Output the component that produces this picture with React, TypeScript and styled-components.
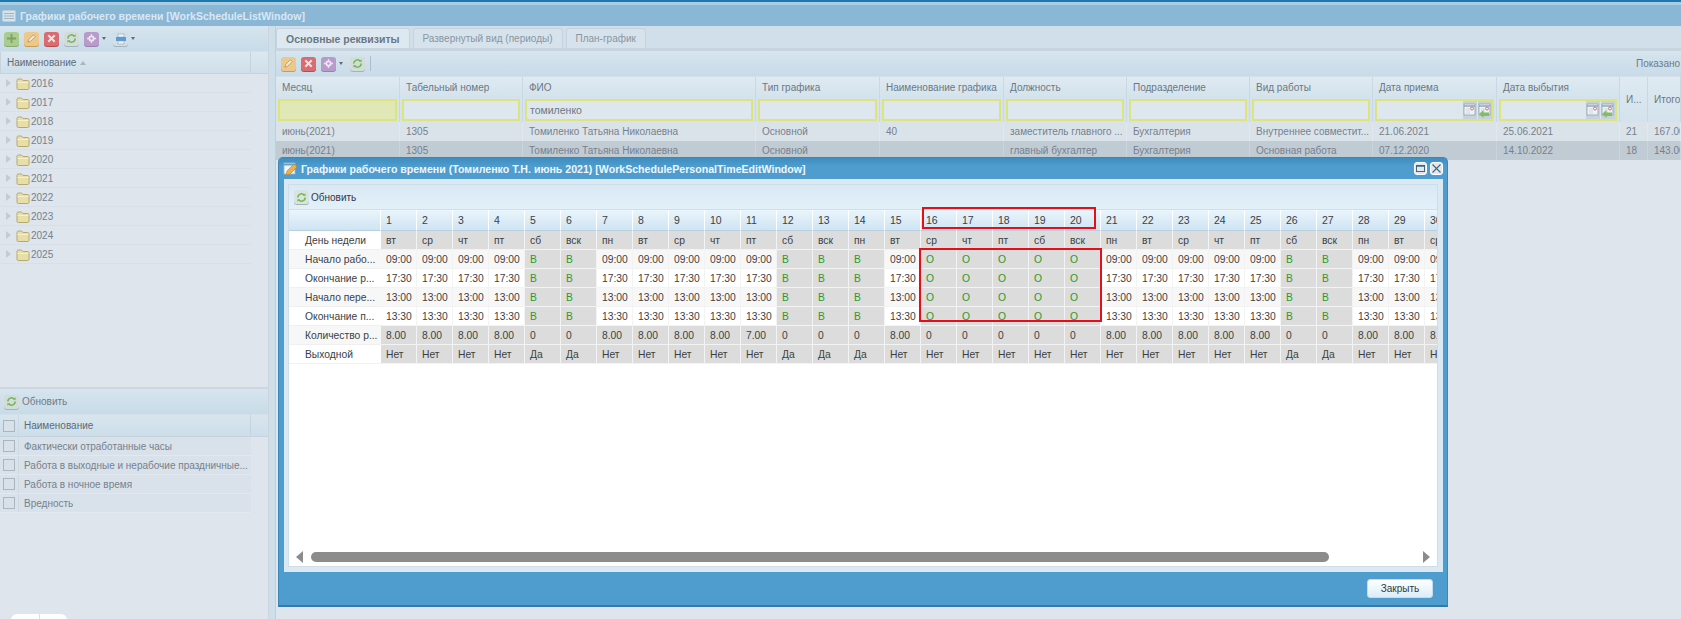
import React from 'react';
import styled, { createGlobalStyle } from 'styled-components';

const GlobalStyle = createGlobalStyle`
  html, body {
    margin: 0;
    padding: 0;
    height: 100%;
    overflow: hidden;
    background: #dee5ec;
  }
  #root {
    height: 100%;
  }
  * {
    box-sizing: border-box;
  }
`;

const FONT = '"Liberation Sans", "DejaVu Sans", sans-serif';

const Page = styled.div`
  position: relative;
  width: 1681px;
  height: 619px;
  overflow: hidden;
  font-family: ${FONT};
  font-size: 10px;
  color: #6f7c88;
  background: #dee5ec;
  display: flex;
  flex-direction: column;
`;

const TopStrip = styled.div`
  height: 5px;
  flex: none;
  background: linear-gradient(to bottom, #1d78ad 0, #1d78ad 2px, #a9cde2 2px, #a9cde2 5px);
`;

const TitleBar = styled.div`
  height: 21px;
  flex: none;
  display: flex;
  align-items: center;
  gap: 4px;
  padding-left: 2px;
  background: #8ab7d6;
  color: #d9e8f2;
  font-weight: 700;
  font-size: 10.5px;
`;

const Body = styled.div`
  flex: 1;
  display: flex;
  min-height: 0;
`;

const LeftColumn = styled.div`
  width: 269px;
  flex: none;
  display: flex;
  flex-direction: column;
  border-right: 1px solid #c9d5df;
`;

const Splitter = styled.div`
  width: 7px;
  flex: none;
  background: #cfdfea;
  border-right: 1px solid #c4ced8;
`;

const RightColumn = styled.div`
  flex: 1;
  min-width: 0;
  display: flex;
  flex-direction: column;
`;

const Toolbar = styled.div<{ $inset?: number }>`
  height: 26px;
  flex: none;
  display: flex;
  align-items: center;
  gap: 5px;
  padding: 0 4px 0 ${(p) => p.$inset ?? 4}px;
  background: linear-gradient(to bottom, #d6e5ef, #c8dbe8);
  border-bottom: 1px solid #d4dfe7;
`;

const ToolButton = styled.span<{ $c: string; $d: string }>`
  width: 15px;
  height: 14px;
  flex: none;
  display: inline-flex;
  align-items: center;
  justify-content: center;
  border-radius: 3px;
  background: ${(p) => p.$c};
  box-shadow: 0 1px 0 ${(p) => p.$d};
`;

const Caret = styled.span`
  width: 0;
  height: 0;
  margin: 0 2px 0 -2px;
  border-left: 2.5px solid transparent;
  border-right: 2.5px solid transparent;
  border-top: 3px solid #5e6b76;
`;

const TreeHeader = styled.div`
  height: 22px;
  flex: none;
  display: flex;
  background: linear-gradient(to bottom, #dce8f0, #cfdfea);
  border-bottom: 1px solid #c4d3de;
  color: #5d6b78;
`;

const TreeHeaderCell = styled.div`
  width: 251px;
  flex: none;
  display: flex;
  align-items: center;
  gap: 4px;
  padding-left: 6px;
  border-left: 1px solid #c4d3de;
  border-right: 1px solid #c4d3de;
`;

const SortArrow = styled.span`
  width: 0;
  height: 0;
  border-left: 3px solid transparent;
  border-right: 3px solid transparent;
  border-bottom: 4px solid #a9b6c1;
`;

const TreeRow = styled.div`
  height: 19px;
  width: 251px;
  flex: none;
  display: flex;
  align-items: center;
  padding-left: 6px;
  border-bottom: 1px solid #d7e0e8;
  color: #75818c;
`;

const Expander = styled.span`
  width: 0;
  height: 0;
  margin-right: 5px;
  border-top: 4px solid transparent;
  border-bottom: 4px solid transparent;
  border-left: 5px solid #c1ccd5;
`;

const Folder = styled.svg`
  width: 14px;
  height: 13px;
  margin-right: 1px;
  flex: none;
`;

const LeftTop = styled.div`
  height: 363px;
  flex: none;
  display: flex;
  flex-direction: column;
  border-bottom: 2px solid #cdd7e0;
`;

const RefreshLabel = styled.span`
  color: #6f7c88;
  margin-left: -2px;
`;

const CheckHeader = styled.div`
  height: 22px;
  flex: none;
  display: flex;
  align-items: center;
  background: linear-gradient(to bottom, #d8e5ee, #cddeea);
  border-bottom: 1px solid #c4d3de;
  color: #5d6b78;
`;

const CheckHeaderName = styled.div`
  width: 232px;
  height: 100%;
  flex: none;
  display: flex;
  align-items: center;
  padding-left: 5px;
  border-right: 1px solid #c4d3de;
`;

const CheckCell = styled.div`
  width: 19px;
  height: 100%;
  flex: none;
  display: flex;
  align-items: center;
  justify-content: center;
  border-right: 1px solid #ced9e2;
`;

const CheckBox = styled.span`
  width: 12px;
  height: 12px;
  border: 1px solid #a9b5bf;
  background: #d9e1e8;
`;

const CheckLabel = styled.span`
  padding-left: 5px;
  white-space: nowrap;
  overflow: hidden;
  text-overflow: ellipsis;
`;

const CheckRow = styled.div`
  width: 251px;
  height: 19px;
  flex: none;
  display: flex;
  align-items: center;
  background: #d9e2ea;
  border-bottom: 1px solid #e2e8ee;
  color: #75818c;
`;

const Tabs = styled.div`
  height: 25px;
  flex: none;
  display: flex;
  align-items: flex-end;
  gap: 3px;
  background: #d0dfe9;
  border-bottom: 3px solid #c9d5de;
`;

const Tab = styled.div<{ $active?: boolean }>`
  height: 20px;
  display: flex;
  align-items: center;
  padding: 0 9px;
  border-radius: 3px 3px 0 0;
  border: 1px solid #c5d3de;
  border-bottom: none;
  font-size: ${(p) => (p.$active ? '10.5px' : '10px')};
  background: ${(p) => (p.$active ? '#dde8f0' : '#d6e3ec')};
  color: ${(p) => (p.$active ? '#6a7884' : '#8996a1')};
  font-weight: ${(p) => (p.$active ? 700 : 400)};
`;

const ShownLabel = styled.span`
  margin-left: auto;
  margin-right: -4px;
  width: 45px;
  overflow: hidden;
  white-space: nowrap;
  color: #6f7c88;
`;

const ToolDivider = styled.span`
  width: 1px;
  height: 15px;
  background: #aebfcb;
`;

const MainGrid = styled.div`
  display: grid;
  grid-template-columns: 124px 123px 233px 124px 124px 123px 123px 123px 124px 123px 28px 1fr;
  grid-template-rows: 21px 24px 19px 19px;
  flex: none;
`;

const HeadCell = styled.div<{ $span?: boolean }>`
  display: flex;
  align-items: center;
  padding-left: 6px;
  white-space: nowrap;
  overflow: hidden;
  background: linear-gradient(to bottom, #dfeaf2, #d3e2ec);
  border-right: 1px solid #c9d8e2;
  color: #6a7884;
  ${(p) => p.$span && 'grid-row: span 2;'}
`;

const FilterCell = styled.div`
  background: #d5e3ec;
  border-right: 1px solid #c9d8e2;
  padding: 0 2px;
  display: flex;
  align-items: center;
`;

const FilterInput = styled.div<{ $filled?: boolean }>`
  flex: 1;
  height: 22px;
  min-width: 0;
  display: flex;
  align-items: center;
  justify-content: flex-end;
  border: 2px solid #dde47c;
  background: ${(p) => (p.$filled ? '#dfe8b6' : '#dfe7ee')};
  color: #6a7884;
  font-size: 10.5px;
`;

const FilterText = styled.span`
  flex: 1;
  padding-left: 3px;
`;

const DateButton = styled.span`
  width: 15px;
  height: 18px;
  flex: none;
  display: flex;
  align-items: center;
  justify-content: center;
  background: #c6d3de;
  border-left: 1px solid #dfe7ee;
`;

const DataCell = styled.div<{ $selected?: boolean }>`
  display: flex;
  align-items: center;
  padding-left: 6px;
  white-space: nowrap;
  overflow: hidden;
  background: ${(p) => (p.$selected ? '#c1cbd4' : '#dbe3ea')};
  border-right: 1px solid ${(p) => (p.$selected ? '#cbd4dc' : '#e2e8ee')};
  color: #75818c;
`;

const Window = styled.div`
  position: absolute;
  left: 278px;
  top: 157px;
  width: 1170px;
  height: 450px;
  display: flex;
  flex-direction: column;
  background: #4f9dcf;
  border-radius: 5px 5px 0 0;
  border: 1px solid #3d87b8;
  border-bottom: 2px solid #3479a8;
`;

const WindowTitle = styled.div`
  height: 21px;
  flex: none;
  display: flex;
  align-items: center;
  gap: 3px;
  padding: 0 4px;
  color: #eef6fb;
  font-weight: 700;
  font-size: 10.6px;
  background: linear-gradient(to bottom, #3f8cbf, #4f9dcf 40%);
  border-radius: 4px 4px 0 0;
`;

const TitleSpacer = styled.span`
  flex: 1;
`;

const WinButton = styled.span`
  width: 13px;
  height: 13px;
  display: flex;
  align-items: center;
  justify-content: center;
  background: #dfe9f1;
  border: 1px solid #ffffff;
  border-radius: 3px;
`;

const WindowBody = styled.div`
  flex: none;
  height: 393px;
  margin: 0 4px 0 5px;
  padding: 5px 5px 5px 4px;
  background: #dbe9f4;
`;

const InnerPanel = styled.div`
  position: relative;
  height: 100%;
  display: flex;
  flex-direction: column;
  background: #ffffff;
  border: 1px solid #cfdde8;
`;

const InnerToolbar = styled.div`
  height: 25px;
  flex: none;
  display: flex;
  align-items: center;
  gap: 2px;
  padding-left: 5px;
  background: linear-gradient(to bottom, #d9e9f4, #e2f0f9);
  color: #2f3a44;
  border-bottom: 1px solid #d3dee6;
`;

const ScheduleGrid = styled.div`
  flex: none;
  overflow: hidden;
  display: grid;
  grid-template-columns: 92px repeat(30, 36px);
  grid-template-rows: 21px repeat(7, 19px);
  color: #3a3f45;
  font-size: 10.3px;
`;

const DayHead = styled.div`
  display: flex;
  align-items: center;
  padding-left: 5px;
  background: linear-gradient(to bottom, #eaf5fc, #cfe4f3);
  border-right: 1px solid #ffffff;
  border-bottom: 1px solid #b9cfdf;
  font-size: 10.5px;
`;

const RowLabel = styled.div<{ $alt?: boolean }>`
  display: flex;
  align-items: center;
  padding-left: 16px;
  white-space: nowrap;
  overflow: hidden;
  background: ${(p) => (p.$alt ? '#f7f7f7' : '#ffffff')};
  border-bottom: 1px solid #f0f0f0;
`;

const DayCell = styled.div<{ $off?: boolean; $gray?: boolean; $alt?: boolean }>`
  display: flex;
  align-items: center;
  padding-left: 5px;
  white-space: nowrap;
  overflow: hidden;
  background: ${(p) => (p.$off || p.$gray ? '#dcdcdc' : p.$alt ? '#f7f7f7' : '#ffffff')};
  color: ${(p) => (p.$off ? '#2a9a2a' : '#3a3f45')};
  border-right: 1px solid #f3f3f3;
  border-bottom: 1px solid #f3f3f3;
`;

const HeaderMark = styled.div`
  position: absolute;
  left: 633px;
  top: 22px;
  width: 174px;
  height: 22px;
  border: 2px solid #e3101b;
  pointer-events: none;
`;

const BodyMark = styled.div`
  position: absolute;
  left: 630px;
  top: 63px;
  width: 183px;
  height: 74px;
  border: 2px solid #e3101b;
  pointer-events: none;
`;

const ScrollTrack = styled.div`
  margin-top: auto;
  height: 18px;
  flex: none;
  display: flex;
  align-items: center;
  gap: 8px;
  padding: 0 7px;
`;

const ScrollThumb = styled.div`
  height: 10px;
  width: 1018px;
  border-radius: 5px;
  background: #8c8c8c;
`;

const ScrollEnd = styled.span<{ $right?: boolean }>`
  width: 0;
  height: 0;
  border-top: 6px solid transparent;
  border-bottom: 6px solid transparent;
  ${(p) =>
    p.$right
      ? 'border-left: 7px solid #8c8c8c; margin-left: auto;'
      : 'border-right: 7px solid #8c8c8c;'}
`;

const Footer = styled.div`
  flex: 1;
  display: flex;
  align-items: center;
  justify-content: flex-end;
  padding-right: 14px;
`;

const CloseButton = styled.div`
  width: 66px;
  height: 19px;
  display: flex;
  align-items: center;
  justify-content: center;
  border-radius: 3px;
  background: linear-gradient(to bottom, #ffffff, #dcedf8);
  border: 1px solid #c6dcec;
  color: #2f3a44;
`;

const BottomTabs = styled.div`
  position: absolute;
  left: 11px;
  bottom: -6px;
  width: 56px;
  height: 11px;
  display: flex;
  background: #ffffff;
  border-radius: 6px 6px 0 0;
`;

const BottomTabPart = styled.span`
  flex: 1;
  & + & {
    border-left: 1px solid #d8dfe5;
  }
`;

const Refresh = () => (
  <svg width="11" height="11" viewBox="0 0 12 12" fill="none">
    <path d="M2 6a4 4 0 0 1 7-2.600" stroke="#6cb84a" strokeWidth="1.600" />
    <path d="M10 6a4 4 0 0 1-7 2.600" stroke="#6cb84a" strokeWidth="1.600" />
    <path d="M7.500 4.200h3V1.400zM4.500 7.800h-3v2.800z" fill="#6cb84a" />
  </svg>
);

const Plus = () => (
  <svg width="11" height="11" viewBox="0 0 12 12">
    <path d="M5 1h2v4h4v2H7v4H5V7H1V5h4z" fill="#83a064" />
  </svg>
);

const Pencil = () => (
  <svg width="11" height="11" viewBox="0 0 12 12" fill="none">
    <path d="M2 10l1-3 5-5 2 2-5 5z" fill="#f3ead8" stroke="#a8834d" strokeWidth="0.700" />
  </svg>
);

const Cross = () => (
  <svg width="11" height="11" viewBox="0 0 12 12">
    <path d="M2.500 2.500l7 7M9.500 2.500l-7 7" stroke="#f6dfdf" strokeWidth="2.200" />
  </svg>
);

const Gear = () => (
  <svg width="11" height="11" viewBox="0 0 12 12">
    <circle cx="6" cy="6" r="3.400" fill="#ede6f2" />
    <circle cx="6" cy="6" r="1.300" fill="#b79ccb" />
    <path d="M6 1v2M6 9v2M1 6h2M9 6h2" stroke="#ede6f2" strokeWidth="1.400" />
  </svg>
);

const Printer = () => (
  <svg width="12" height="12" viewBox="0 0 12 12">
    <rect x="3" y="1" width="6" height="3" fill="#f3f6f8" stroke="#7ea7c9" strokeWidth="0.600" />
    <rect x="1" y="4" width="10" height="4" fill="#5d9bd0" />
    <rect x="3" y="8" width="6" height="3" fill="#f3f6f8" stroke="#7ea7c9" strokeWidth="0.600" />
  </svg>
);

const FolderIcon = () => (
  <Folder viewBox="0 0 14 13">
    <path d="M1 3.500C1 2.500 1.500 2 2.500 2h3l1.500 1.500h4.500c1 0 1.500.5 1.500 1.500v6c0 1-.5 1.500-1.500 1.500h-9C1.500 12.500 1 12 1 11z" fill="#e8dfa8" stroke="#a8995a" strokeWidth="0.800" />
    <path d="M1.500 5.500h11" stroke="#f6efc9" strokeWidth="1" />
  </Folder>
);

const CalendarIcon = ({ clear }: { clear?: boolean }) => (
  <svg width="14" height="15" viewBox="0 0 14 15">
    <rect x="1" y="1" width="11" height="11" fill="#eef2f5" stroke="#8fa2b3" strokeWidth="0.800" />
    <path d="M1 3h11" stroke="#8fa2b3" strokeWidth="1.400" />
    <path d="M3 6h4M3 8h4M3 10h4" stroke="#c3ced8" strokeWidth="0.700" />
    <circle cx="9" cy="5.500" r="1.500" fill="none" stroke="#c65a6b" strokeWidth="0.800" />
    {clear && <path d="M1 11l4.500-4v2.500H11v3.500H5.500V15z" fill="#83bd62" />}
  </svg>
);

const ListIcon = () => (
  <svg width="14" height="14" viewBox="0 0 14 14">
    <rect x="0.500" y="1.500" width="13" height="11" rx="1" fill="#d5e3ec" stroke="#b8cbd9" />
    <path d="M2 4.500h10M2 7h10M2 9.500h10" stroke="#9db5c7" strokeWidth="1.200" />
  </svg>
);

const EditWindowIcon = () => (
  <svg width="15" height="15" viewBox="0 0 15 15">
    <rect x="1" y="2" width="11" height="11" fill="#f1f6fa" stroke="#9db7cb" strokeWidth="0.800" />
    <path d="M1 3.500h11" stroke="#6f9fcb" strokeWidth="2" />
    <path d="M3 14l1-4 7-7 3 3-7 7z" fill="#eeb04a" stroke="#b97f26" strokeWidth="0.600" />
  </svg>
);

const years = ['2016', '2017', '2018', '2019', '2020', '2021', '2022', '2023', '2024', '2025'];
const indicators = [
  'Фактически отработанные часы',
  'Работа в выходные и нерабочие праздничные...',
  'Работа в ночное время',
  'Вредность',
];
const mainColumns = [
  'Месяц',
  'Табельный номер',
  'ФИО',
  'Тип графика',
  'Наименование графика',
  'Должность',
  'Подразделение',
  'Вид работы',
  'Дата приема',
  'Дата выбытия',
];
const mainRows = [
  ['июнь(2021)', '1305', 'Томиленко Татьяна Николаевна', 'Основной', '40', 'заместитель главного ...', 'Бухгалтерия', 'Внутреннее совместит...', '21.06.2021', '25.06.2021', '21', '167.00'],
  ['июнь(2021)', '1305', 'Томиленко Татьяна Николаевна', 'Основной', '', 'главный бухгалтер', 'Бухгалтерия', 'Основная работа', '07.12.2020', '14.10.2022', '18', '143.00'],
];

const weekdays = ['вт', 'ср', 'чт', 'пт', 'сб', 'вск', 'пн'];
const days = Array.from({ length: 30 }, (_, i) => i + 1);
const leaveDays = [16, 17, 18, 19, 20];
const weekendDays = [5, 6, 12, 13, 14, 26, 27];
const timeRows = [
  { label: 'Начало рабо...', value: '09:00' },
  { label: 'Окончание р...', value: '17:30' },
  { label: 'Начало пере...', value: '13:00' },
  { label: 'Окончание п...', value: '13:30' },
];

const hoursFor = (d: number) => {
  if (weekendDays.includes(d) || leaveDays.includes(d)) return '0';
  return d === 11 ? '7.00' : '8.00';
};

const dayOffFor = (d: number) => (weekendDays.includes(d) ? 'Да' : 'Нет');

const timeFor = (d: number, value: string) => {
  if (leaveDays.includes(d)) return 'О';
  if (weekendDays.includes(d)) return 'В';
  return value;
};

const App: React.FC = () => {
  return (
    <Page>
      <GlobalStyle />
      <TopStrip />
      <TitleBar>
        <ListIcon />
        Графики рабочего времени [WorkScheduleListWindow]
      </TitleBar>
      <Body>
        <LeftColumn>
          <LeftTop>
            <Toolbar>
              <ToolButton $c="#a9cd8f" $d="#8aab70"><Plus /></ToolButton>
              <ToolButton $c="#eec88a" $d="#c99a55"><Pencil /></ToolButton>
              <ToolButton $c="#d96c70" $d="#b84d50"><Cross /></ToolButton>
              <ToolButton $c="#d3dcdb" $d="#a7b2b4"><Refresh /></ToolButton>
              <ToolButton $c="#b79ccb" $d="#9a80ad"><Gear /></ToolButton>
              <Caret />
              <ToolButton $c="#d3dfe8" $d="#a7b2b4"><Printer /></ToolButton>
              <Caret />
            </Toolbar>
            <TreeHeader>
              <TreeHeaderCell>
                Наименование <SortArrow />
              </TreeHeaderCell>
            </TreeHeader>
            {years.map((y) => (
              <TreeRow key={y}>
                <Expander />
                <FolderIcon />
                {y}
              </TreeRow>
            ))}
          </LeftTop>
          <Toolbar>
            <ToolButton $c="#d3dcdb" $d="#a7b2b4"><Refresh /></ToolButton>
            <RefreshLabel>Обновить</RefreshLabel>
          </Toolbar>
          <CheckHeader>
            <CheckCell><CheckBox /></CheckCell>
            <CheckHeaderName>Наименование</CheckHeaderName>
          </CheckHeader>
          {indicators.map((t) => (
            <CheckRow key={t}>
              <CheckCell><CheckBox /></CheckCell>
              <CheckLabel>{t}</CheckLabel>
            </CheckRow>
          ))}
        </LeftColumn>
        <Splitter />
        <RightColumn>
          <Tabs>
            <Tab $active>Основные реквизиты</Tab>
            <Tab>Развернутый вид (периоды)</Tab>
            <Tab>План-график</Tab>
          </Tabs>
          <Toolbar $inset={5}>
            <ToolButton $c="#eec88a" $d="#c99a55"><Pencil /></ToolButton>
            <ToolButton $c="#d96c70" $d="#b84d50"><Cross /></ToolButton>
            <ToolButton $c="#b79ccb" $d="#9a80ad"><Gear /></ToolButton>
            <Caret />
            <ToolButton $c="#d3dcdb" $d="#a7b2b4"><Refresh /></ToolButton>
            <ToolDivider />
            <ShownLabel>Показано</ShownLabel>
          </Toolbar>
          <MainGrid>
            {mainColumns.map((c) => (
              <HeadCell key={c}>{c}</HeadCell>
            ))}
            <HeadCell $span>И...</HeadCell>
            <HeadCell $span>Итого</HeadCell>
            {mainColumns.map((c, i) => (
              <FilterCell key={c}>
                <FilterInput $filled={i === 0}>
                  <FilterText>{c === 'ФИО' ? 'томиленко' : ''}</FilterText>
                  {i >= 8 && (
                    <>
                      <DateButton><CalendarIcon /></DateButton>
                      <DateButton><CalendarIcon clear /></DateButton>
                    </>
                  )}
                </FilterInput>
              </FilterCell>
            ))}
            {mainRows.map((row, r) =>
              row.map((v, i) => (
                <DataCell key={`${r}-${i}`} $selected={r === 1}>{v}</DataCell>
              )),
            )}
          </MainGrid>
        </RightColumn>
      </Body>
      <BottomTabs>
        <BottomTabPart />
        <BottomTabPart />
      </BottomTabs>
      <Window>
        <WindowTitle>
          <EditWindowIcon />
          Графики рабочего времени (Томиленко Т.Н. июнь 2021) [WorkSchedulePersonalTimeEditWindow]
          <TitleSpacer />
          <WinButton>
            <svg width="9" height="9" viewBox="0 0 9 9" fill="none">
              <rect x="0.500" y="1.500" width="8" height="6" stroke="#4a6478" />
              <path d="M0.500 2h8" stroke="#4a6478" strokeWidth="1.500" />
            </svg>
          </WinButton>
          <WinButton>
            <svg width="9" height="9" viewBox="0 0 9 9">
              <path d="M0.500 0.500l8 8M8.500 0.500l-8 8" stroke="#4a6478" strokeWidth="1.100" />
            </svg>
          </WinButton>
        </WindowTitle>
        <WindowBody>
          <InnerPanel>
            <InnerToolbar>
              <ToolButton $c="#d9e3df" $d="#a7b2b4"><Refresh /></ToolButton>
              Обновить
            </InnerToolbar>
            <ScheduleGrid>
              <DayHead />
              {days.map((d) => (
                <DayHead key={d}>{d}</DayHead>
              ))}
              <RowLabel>День недели</RowLabel>
              {days.map((d) => (
                <DayCell key={d} $gray>{weekdays[(d - 1) % 7]}</DayCell>
              ))}
              {timeRows.map((row, r) => (
                <React.Fragment key={row.label}>
                  <RowLabel $alt={r % 2 === 0}>{row.label}</RowLabel>
                  {days.map((d) => (
                    <DayCell
                      key={d}
                      $alt={r % 2 === 0}
                      $off={weekendDays.includes(d) || leaveDays.includes(d)}
                    >
                      {timeFor(d, row.value)}
                    </DayCell>
                  ))}
                </React.Fragment>
              ))}
              <RowLabel $alt>Количество р...</RowLabel>
              {days.map((d) => (
                <DayCell key={d} $gray>{hoursFor(d)}</DayCell>
              ))}
              <RowLabel>Выходной</RowLabel>
              {days.map((d) => (
                <DayCell key={d} $gray>{dayOffFor(d)}</DayCell>
              ))}
            </ScheduleGrid>
            <HeaderMark />
            <BodyMark />
            <ScrollTrack>
              <ScrollEnd />
              <ScrollThumb />
              <ScrollEnd $right />
            </ScrollTrack>
          </InnerPanel>
        </WindowBody>
        <Footer>
          <CloseButton>Закрыть</CloseButton>
        </Footer>
      </Window>
    </Page>
  );
};

export default App;
